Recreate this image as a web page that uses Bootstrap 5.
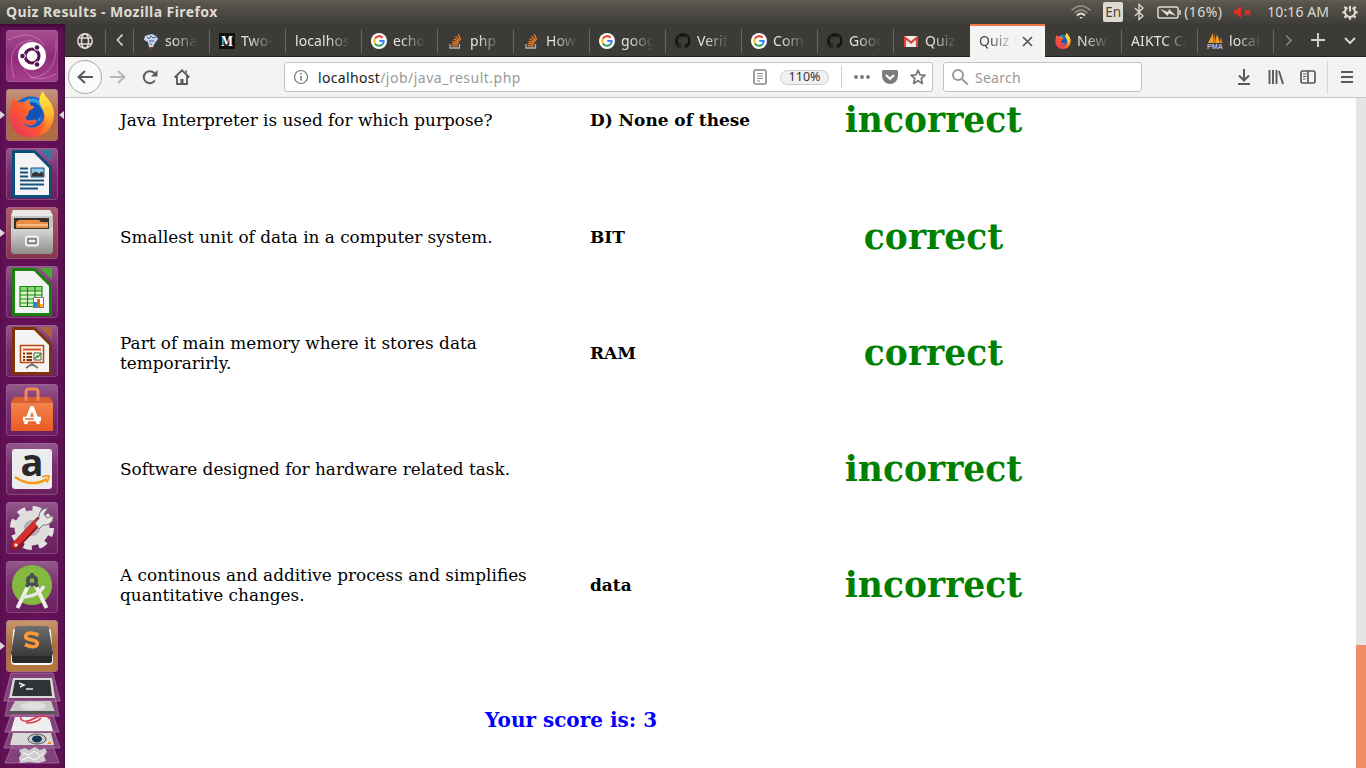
<!DOCTYPE html>
<html lang="en">
<head>
<meta charset="utf-8">
<title>Quiz Results</title>
<link href="https://cdn.jsdelivr.net/npm/bootstrap@5.3.0/dist/css/bootstrap.min.css" rel="stylesheet">
<style>
body{font-family:"Noto Sans",sans-serif;font-size:14px;line-height:1;background:#fff}
svg{display:block;flex:none;overflow:visible}
.topbar{height:24px;background:linear-gradient(#605d52,#56544b 15%,#3e3d39);color:#dfdbd2;padding:0 6px;white-space:nowrap}
.topbar .wintitle{font-weight:700;font-size:14px;letter-spacing:.42px}
.lang{width:20px;height:20px;background:#dfdbd2;color:#45433c;border-radius:2px;font-size:13.5px;padding-top:2px}
.tray svg{fill:none;stroke:#dfdbd2}
.launcher{width:65px;background:linear-gradient(90deg,#5f1053,#651059 60%,#5d1052 97%,#43103c);padding:6px 0 0 6px;box-shadow:inset 0 5px 5px -3px #35082e}
.tile{width:52px;height:52px;margin-bottom:7px;border-radius:4px;background:linear-gradient(#93598b,#792f6f 45%,#6a205f);box-shadow:inset 0 0 0 1px #a36a9c80;position:relative}
.tile.dash{background:linear-gradient(#a94f92,#8e2b79 50%,#a63f8c)}
.tile.fire{background:linear-gradient(#c6987d,#ac6a48 50%,#b46d43)}
.tile.files{background:linear-gradient(#a95c69,#88334a)}
.tile.subl{background:linear-gradient(#c89a70,#a96c38 50%,#b4773f)}
.pip{position:absolute;top:22px;width:5px;height:8px;background:#ddd4dc}
.pip-l{left:-6px;clip-path:polygon(0 0,100% 50%,0 100%)}
.pip-r{right:-6px;clip-path:polygon(100% 0,0 50%,100% 100%)}
.tabstrip{height:33px;background:#3c3b37;border-bottom:1px solid #22211f;color:#e4e1da}
.tabstrip .cell{height:32px;padding-top:2px;display:flex;align-items:center;justify-content:center;position:relative;flex:none}
.tabstrip .sep::after{content:"";position:absolute;right:0;top:5px;height:24px;width:1px;background:#67665f}
.tabstrip .btab{width:76px;padding:2px 12px 0 9px;justify-content:flex-start;gap:6px}
.btab svg{width:16px;height:16px}
.fade-text{flex:1 1 0;min-width:0;overflow:hidden;white-space:nowrap;line-height:22px;letter-spacing:.1px;-webkit-mask-image:linear-gradient(90deg,#000 25%,transparent 98%);mask-image:linear-gradient(90deg,#000 25%,transparent 98%)}
.btab .wide-text{-webkit-mask-image:linear-gradient(90deg,#000 60%,transparent 100%);mask-image:linear-gradient(90deg,#000 60%,transparent 100%)}
.tabstrip .current{height:33px;width:75px;margin-right:1px;padding-top:0;padding-bottom:1px;background:#f5f4f3;color:#474744;border-top:2px solid #f0764b;gap:5px}
.navtools{height:41px;background:#f4f3f2;border-bottom:1px solid #c6c5c3;padding:0 10px 0 3px;color:#5a5a58}
.navtools svg{fill:none;stroke:currentColor}
.backbtn{width:34px;height:34px;border:1px solid #a9a8a6;border-radius:50%;background:#fbfbfb}
.field{height:30px;background:#fff;border:1px solid #c5c3c0;border-radius:3px;color:#999}
.field>span{padding-top:1px}
.urlfield{width:649px;margin-left:94px;padding:0 6px 0 8px}
.searchfield{width:199px;margin-left:10px;padding-left:8px}
.field>.zoompill{width:49px;height:15px;margin-left:13px;padding:1px 0 0;border:1px solid #ccc;border-radius:8px;background:#f1f1f1;color:#333;font-size:12.5px}
.viewport{height:670px;overflow:hidden;font-family:"DejaVu Serif",serif;font-size:16.94px;line-height:20px;color:#000;padding-left:55px}
.results{margin-top:-36.2px}
.result{height:116px;display:grid;grid-template-columns:470px 242px 203px;align-items:center}
.result:first-child{height:117px}
.result .ask{padding-right:40px;font-size:16.88px}
.verdict{font-size:34.5px;line-height:42px;font-weight:700;color:green;text-align:center}
.score{color:#00f;font-size:20px;font-weight:700;line-height:24px;margin:64.7px 0 0 365px}
.track{width:10px;height:670px;background:#e5e5e5;padding-top:547px}
.thumb{height:123px;background:#f08d67}
</style>
</head>
<body class="overflow-hidden">
<svg width="0" height="0" class="position-absolute">
<defs>
<linearGradient id="gOr" x2="0" y2="1"><stop stop-color="#f58b57"/><stop offset="1" stop-color="#e85a22"/></linearGradient>
<linearGradient id="gGray" x2="0" y2="1"><stop stop-color="#dcdcda"/><stop offset="1" stop-color="#8e8e8c"/></linearGradient>
<linearGradient id="gKey" x2="0" y2="1"><stop stop-color="#6e6e6e"/><stop offset="1" stop-color="#3a3a3a"/></linearGradient>
<linearGradient id="gFox" x1="0" x2="1" y1="1" y2="0"><stop stop-color="#e9296b"/><stop offset=".45" stop-color="#fd5b2d"/><stop offset="1" stop-color="#ffd23c"/></linearGradient>
<linearGradient id="gTail" x2="0" y2="1"><stop stop-color="#fff04d"/><stop offset=".5" stop-color="#ffb92b"/><stop offset="1" stop-color="#fb5a2b"/></linearGradient>
<symbol id="google" viewBox="0 0 16 16"><circle cx="8" cy="8" r="8" fill="#fff"/><g fill="none" stroke-width="2.1"><path d="M11.6 4.7A4.7 4.7 0 0 0 4 5.6" stroke="#ea4335"/><path d="M4 5.6a4.7 4.7 0 0 0 0 4.9" stroke="#fbbc05"/><path d="M4 10.5a4.7 4.7 0 0 0 7.3 1" stroke="#34a853"/><path d="M11.3 11.5A4.7 4.7 0 0 0 12.7 8H8.2" stroke="#4285f4"/></g></symbol>
<symbol id="stack" viewBox="0 0 16 16"><path d="M1 11v4h9.500v-4" fill="none" stroke="#aab4bd" stroke-width="1.300"/><g stroke="#f48024" stroke-width="1.300"><path d="M2.800 12.800h6M2.900 10.600l6 .6M3.500 8.300l5.900 1.600M4.700 5.800l5.400 3M6.500 3.400l4.300 4.400M9.200 1.400l2.500 5.300"/></g></symbol>
<symbol id="hub" viewBox="0 0 16 16"><path fill="#171615" d="M8 0a8 8 0 0 0-2.5 15.6c.4.1.5-.2.5-.4v-1.5c-2 .4-2.6-.5-2.8-1-.1-.2-.5-1-.8-1.2-.3-.1-.7-.5 0-.5s1.100.6 1.200.8c.700 1.200 1.900.9 2.400.7.100-.5.300-.9.500-1.100-1.800-.2-3.600-.9-3.600-4 0-.8.300-1.600.8-2.100-.1-.2-.4-1 .1-2.100 0 0 .7-.2 2.200.8a7.600 7.600 0 0 1 4 0c1.500-1 2.200-.8 2.200-.8.400 1.100.2 1.900.1 2.100.5.600.8 1.300.8 2.100 0 3.100-1.900 3.700-3.600 3.900.3.300.5.700.5 1.500v2.300c0 .2.100.5.500.4A8 8 0 0 0 8 0z"/></symbol>
<symbol id="fox" viewBox="0 0 44 46"><circle cx="21" cy="24" r="19" fill="#1c5fc8"/><path d="M11 13c7-7 14-8 21-2l-2 18-15 4z" fill="#27a2e8"/><path d="M15 13c7-6 17-1 17 9l-5 8-13-2z" fill="#1552b5"/><path fill="url(#gFox)" d="M3 6c2 1 4 3 5 5 2-1 5-1 7 0 1-2 3-3 5-4-1 3-1 5 1 7l3 1c1 2-4 3-5 5-1 2 0 4-3 5-1 4 4 5 9 3 2 0 2 2 0 4-4 4-9 1-12-1 3 5 11 8 18 1 5-5 4-15-1-20 0-4-1-7 2-12l2 3c5 5 9 12 9 20 0 13-9 23-22 23C8 46 0 36 0 25 0 17 2 12 3 6z"/><path fill="url(#gTail)" d="M30 12c-2-4 1-9 3-12 2 6 11 11 11 23 0 12-8 21-18 22 8-5 12-14 8-23-1-4-3-6-4-10z"/></symbol>
</defs></svg>

<header class="topbar d-flex align-items-center justify-content-between">
  <span class="wintitle">Quiz Results - Mozilla Firefox</span>
  <div class="tray d-flex align-items-center">
    <svg width="20" height="16" viewBox="0 0 20 16" stroke-width="1.6"><g opacity=".5"><path d="M.5 6.500Q10-2.500 19.500 6.500M3.500 9q6.500-6 13 0"/></g><path d="M6 11.500q4-4 8 0" stroke-width="2"/><path d="M8.300 13h3.400L10 15z" fill="#dfdbd2" stroke="none"/></svg>
    <span class="lang d-flex align-items-center justify-content-center" style="margin-left:12px">En</span>
    <svg width="10" height="16" viewBox="0 0 10 16" stroke-width="1.3" style="margin-left:11px"><path d="M1 4l8 8-4 3.500V.5L9 4l-8 8"/></svg>
    <svg width="25" height="13" viewBox="0 0 25 13" stroke-width="1.500" style="margin-left:13px"><rect x="1" y="1" width="20" height="11" rx="1.500"/><path d="M23 4v5"/><path d="M3 3l8 3 1-3 7 7-7-2.500-1.500 2.500z" fill="#dfdbd2" stroke="none"/></svg>
    <span style="margin-left:2px;letter-spacing:.4px">(16%)</span>
    <svg width="18" height="12" viewBox="0 0 18 12" style="margin-left:12px"><path d="M0 4h2.500L7 0v12L2.500 8H0z" fill="#e03020" stroke="none"/><path d="M11 4l5 5m0-5l-5 5" stroke="#e03020" stroke-width="1.900"/></svg>
    <span style="margin-left:15px;letter-spacing:.08px">10:16 AM</span>
    <svg width="16" height="16" viewBox="0 0 16 16" stroke-width="2" style="margin:0 2px 0 13px"><path d="M5.500 3.700a5 5 0 1 0 5 0"/><path d="M8 2v5.500"/><path stroke-width="2.200" d="M.3 8.300h2.500M13.200 8.300h2.500M2.300 2.700l2 2M13.700 2.700l-2 2M2.500 13.700l1.800-1.800M13.500 13.700l-1.800-1.800M8 13v2.800"/></svg>
  </div>
</header>

<div class="d-flex">
<aside class="launcher" style="height:744px">
  <div class="tile dash"><svg width="52" height="52" viewBox="0 0 52 52"><g fill="none" stroke="#e6a8d7" stroke-opacity=".45" stroke-width="1"><path d="M2 10q24-12 36 5M8 48Q-2 12 27 10M50 12q2 34-26 36M18 38q8 18 32 6"/></g><circle cx="26" cy="26" r="14" fill="#fff"/><circle cx="26" cy="26" r="7" fill="none" stroke="#5b1450" stroke-width="3.200"/><g fill="#5b1450" stroke="#fff"><circle cx="16.500" cy="26" r="2.800"/><circle cx="31" cy="17.500" r="2.800"/><circle cx="31" cy="34.500" r="2.800"/></g></svg></div>
  <div class="tile fire"><i class="pip pip-l"></i><i class="pip pip-r"></i><svg width="52" height="52" viewBox="0 0 52 52"><use href="#fox" x="4" y="2.500" width="44" height="46"/></svg></div>
  <div class="tile"><svg width="52" height="52" viewBox="0 0 52 52"><path d="M6 3q0-1 1-1h22l17 17v30q0 1-1 1H7q-1 0-1-1z" fill="#0d4f7c"/><path d="M9 5h19l15 15v27H9z" fill="#f4f4f4"/><path d="M34 2h12v12z" fill="#3379a3"/><path d="M14 20.500h8M14 24.500h8M14 28.500h8M14 32.500h24M14 36.500h24M14 40.500h18" stroke="#15527c" stroke-width="2"/><path d="M25 20h13v9H25z" fill="#8dcbea" stroke="#15527c"/><path d="M26 28.500v-3l4-2 3 2 3-2 1.500 2v3z" fill="#333"/></svg></div>
  <div class="tile files"><i class="pip pip-l"></i><svg width="52" height="52" viewBox="0 0 52 52"><path d="M7 3h37l3 6v34H5V9z" fill="#c4c4c1"/><path d="M7 3h37l3 6H5z" fill="#e8e8e6"/><path d="M8 11h35v12H8z" fill="#38322f"/><path d="M10 21v-6l3-2h20l2 2h7v6z" fill="#eb8c43"/><path d="M11 18h31" stroke="#fff0d8"/><path d="M7 22h37l3-2v25l-2 2H7l-2-2V20z" fill="url(#gGray)"/><rect x="20" y="29.500" width="12" height="9" rx="2" fill="none" stroke="#f0f0ee" stroke-width="2"/><rect x="22" y="32" width="8" height="4" fill="#eee" stroke="#555"/></svg></div>
  <div class="tile"><svg width="52" height="52" viewBox="0 0 52 52"><path d="M6 3q0-1 1-1h22l17 17v30q0 1-1 1H7q-1 0-1-1z" fill="#18820c"/><path d="M9 5h19l15 15v27H9z" fill="#f4f4f4"/><path d="M34 2h12v12z" fill="#44ae2e"/><path d="M14 20h22v21H14z" fill="#d9f4c9"/><path d="M14 20h22v5H14z" fill="#8fd67c"/><path d="M14 20.500h22v20H14zM14 25h22M14 29h22M14 33h22M14 37h22M21.500 20v21M29 20v21" fill="none" stroke="#1c8812" stroke-width="1.200"/><path d="M27.500 31.500h10v10h-10z" fill="#fff" stroke="#777"/><path d="M28 36h3v5h-3z" fill="#2486cb"/><path d="M31 33h3v8h-3z" fill="#e85b21"/><path d="M34 38h3v3h-3z" fill="#f5bd1c"/></svg></div>
  <div class="tile"><svg width="52" height="52" viewBox="0 0 52 52"><path d="M6 3q0-1 1-1h22l17 17v30q0 1-1 1H7q-1 0-1-1z" fill="#803306"/><path d="M9 5h19l15 15v27H9z" fill="#f4f4f4"/><path d="M34 2h12v12z" fill="#b0623a"/><path d="M14.500 20.500h23v17h-23z" fill="#fff3e7" stroke="#b44a16" stroke-width="1.500"/><path d="M17 24.500h18" stroke="#d45b20" stroke-width="2"/><path d="M17 28.500h9M17 32h9M17 35h9" stroke="#803306" stroke-width="1.800" stroke-dasharray="2 1.500 6"/><path d="M28 28h7v7h-7z" fill="#fff" stroke="#555"/><path d="M29 34l2-3 1 1 3-4" fill="none" stroke="#39a21f" stroke-width="1.500"/><path d="M26 38v3m0-2l-6 4m6-4l6 4" stroke="#777" stroke-width="2"/></svg></div>
  <div class="tile"><svg width="52" height="52" viewBox="0 0 52 52"><path d="M8 13h36l3 6v28H5V19z" fill="url(#gOr)"/><path d="M5 19h42l-3-6H8z" fill="#d6612f"/><path d="M20 17V8q0-3 3-3h6q3 0 3 3v9" fill="none" stroke="#ef8a5b" stroke-width="3"/><path d="M19.500 40l6-16h1l6 16" stroke="#fff" stroke-width="3.500" fill="none"/><path d="M17 35h18" stroke="#fff" stroke-width="4.500"/><path d="M19 35h9" stroke="#ec6a31" stroke-width="1.500"/></svg></div>
  <div class="tile"><svg width="52" height="52" viewBox="0 0 52 52"><rect x="6" y="6" width="40" height="40" rx="3" fill="#ececec"/><text x="26" y="33" text-anchor="middle" font-family="Open Sans" font-weight="700" font-size="38" fill="#282828">a</text><path d="M9 34q16 11 32 2" fill="none" stroke="#f79a1a" stroke-width="2.600"/><path d="M36 34q4-1.500 7-1-.2 4-2.500 6.500" fill="none" stroke="#f79a1a" stroke-width="1.800"/></svg></div>
  <div class="tile"><svg width="52" height="52" viewBox="0 0 52 52"><circle cx="26" cy="26" r="19" fill="none" stroke="#e3e3e1" stroke-width="6" stroke-dasharray="8 6.920"/><circle cx="26" cy="26" r="12.500" fill="none" stroke="#dededc" stroke-width="10"/><circle cx="26" cy="26" r="8" fill="#b9aeb8"/><path d="M33 19L9 44" stroke="#8c1515" stroke-width="8" stroke-linecap="round"/><path d="M31 20L9 43" stroke="#d92e2e" stroke-width="5.500" stroke-linecap="round"/><path d="M29 21l4-4c-1-6 3-11 9-11l-4 6 3 4 6-2c1 6-5 10-10 9l-4 4z" fill="#e5e5e3" stroke="#777"/><circle cx="10" cy="43" r="1.500" fill="#fff"/></svg></div>
  <div class="tile"><svg width="52" height="52" viewBox="0 0 52 52"><circle cx="26" cy="24" r="20" fill="#84b940"/><path d="M24 21L11.500 47M28 21l12.500 26" stroke="#eee" stroke-width="4"/><path d="M15 36q17 0 23-11" fill="none" stroke="#e8e8e8" stroke-width="3.500"/><circle cx="26" cy="19.500" r="4.200" fill="none" stroke="#4a5052" stroke-width="3.800"/><path d="M26 12v4M22.500 22l-2 4M29.500 22l2 4" stroke="#4a5052" stroke-width="3.500"/></svg></div>
  <div class="tile subl"><i class="pip pip-l"></i><svg width="52" height="52" viewBox="0 0 52 52"><path d="M7 11q1-3 4-3h30q3 0 4 3l2 30q0 4-4 4H9q-4 0-4-4z" fill="#fafafa"/><path d="M6 35h40v6q0 2-2 2H8q-2 0-2-2z" fill="#292929"/><path d="M9 9q0-3 3-3h28q3 0 3 3l4 24q0 3-3 3H8q-3 0-3-3z" fill="url(#gKey)"/><path d="M32.500 15q-8-3.500-11.500-1c-3.500 4 0 5 5 6s7 3 4 6q-3.500 2-11-1.500" fill="none" stroke="#ff9838" stroke-width="3.600"/></svg></div>
  <svg width="58" height="92" viewBox="0 0 58 92" style="margin-top:-6px"><g fill="#a472a0" fill-opacity=".5" stroke="#b48ab0" stroke-opacity=".6"><path d="M5 0h42l7 28H-2zM3 24h46l4 19H-1zM5 42h42l6 17H-1zM4 58h44l6 17H-2zM6 73h41l6 17H-1z"/></g>
  <path d="M7 5h39l3 20H3z" fill="#d9d9d7"/><path d="M9 7h35l2 16H6z" fill="#303336"/><path d="M13 10l5 2-4 2M20 16h7" fill="none" stroke="#eee" stroke-width="1.500"/><path d="M9 28h36l4 11H3z" fill="#c9c9c7"/><ellipse cx="27" cy="33" rx="13" ry="4" fill="#dfdfdd"/><path d="M3 38h46v3H3z" fill="#555"/><path d="M9 44h34l4 14H5z" fill="#eee"/><path d="M15 43c-2 5 5 7 12 3s15-4 16 0M20 50q11 0 15-5" fill="none" stroke="#d73a50" stroke-width="1.500"/><path d="M7 60h38l3 12H4z" fill="#d8d8d6"/><ellipse cx="31" cy="66" rx="9" ry="5" fill="#c8c8c8" stroke="#555"/><ellipse cx="31" cy="66" rx="5" ry="3.500" fill="#173654"/><path d="M42 69h3v2h-3z" fill="#f28c24"/><path d="M13 77l6-2 4 2 6-3 5 3 5-2 2 4-3 4 2 5-8 2-9-1-9 1-1-5 2-4z" fill="#cfcbce"/><path d="M17 80l6 2 5-4 6 5 4-3M16 87l7-3 5 3 6-3" fill="none" stroke="#fff"/></svg>
</aside>

<main class="flex-grow-1" style="min-width:0">
  <div class="tabstrip d-flex">
    <div class="cell sep" style="width:41px;padding-right:2px"><svg width="16" height="16" viewBox="0 0 16 16" fill="none" stroke="#dedbd4" stroke-width="1.500"><circle cx="8" cy="8" r="7.200"/><ellipse cx="8" cy="8" rx="3.500" ry="7.200"/><path d="M1.500 5h13M1.500 11h13"/></svg></div>
    <div class="cell sep" style="width:28px;padding-top:0"><svg width="8" height="12" viewBox="0 0 8 12" fill="none" stroke="#cfcdc7" stroke-width="1.800"><path d="M6.500.5L1.500 6l5 5.500"/></svg></div>
    <div class="cell sep btab"><svg viewBox="0 0 16 16"><path d="M5 2l4-1 4 2 2 3-3 4-2 4H6L5 9 1 7l1-4z" fill="#c6d3ef"/><path d="M4 4l2 2 2-3 2 2 3-1M6 8h5M7 10l2 2" fill="none" stroke="#4c5a86" stroke-width="1"/><path d="M6 14h4v1.500H6z" fill="#a34a22"/></svg><span class="fade-text">sona</span></div>
    <div class="cell sep btab"><svg viewBox="0 0 16 16"><path d="M0 0h16v16H0z" fill="#10100f"/><text x="8" y="12.500" text-anchor="middle" font-family="DejaVu Serif" font-weight="700" font-size="12" textLength="12" lengthAdjust="spacingAndGlyphs" fill="#fff">M</text></svg><span class="fade-text">Two-F</span></div>
    <div class="cell sep btab"><span class="fade-text wide-text">localhost</span></div>
    <div class="cell sep btab"><svg><use href="#google"/></svg><span class="fade-text">echo</span></div>
    <div class="cell sep btab" style="padding-left:11px;gap:5px"><svg><use href="#stack"/></svg><span class="fade-text">php -</span></div>
    <div class="cell sep btab" style="padding-left:11px;gap:5px"><svg><use href="#stack"/></svg><span class="fade-text">How</span></div>
    <div class="cell sep btab"><svg><use href="#google"/></svg><span class="fade-text">goog</span></div>
    <div class="cell sep btab"><svg><use href="#hub"/></svg><span class="fade-text">Verif</span></div>
    <div class="cell sep btab"><svg><use href="#google"/></svg><span class="fade-text">Com</span></div>
    <div class="cell sep btab"><svg><use href="#hub"/></svg><span class="fade-text">Goog</span></div>
    <div class="cell btab"><svg viewBox="0 0 16 16"><path d="M1 3h14v11H1z" fill="#eee"/><path d="M2 14V4.500L8 9.500l6-5V14" fill="none" stroke="#d8443a" stroke-width="2.200"/></svg><span class="fade-text">Quiz</span></div>
    <div class="cell btab current"><span class="fade-text">Quiz R</span><svg style="width:11px;height:11px" viewBox="0 0 11 11" stroke="#555" stroke-width="1.700"><path d="M1 1l9 9m0-9l-9 9"/></svg></div>
    <div class="cell sep btab"><svg><use href="#fox"/></svg><span class="fade-text">New</span></div>
    <div class="cell sep btab"><span class="fade-text wide-text">AIKTC CA</span></div>
    <div class="cell sep btab"><svg viewBox="0 0 16 16"><path d="M6 0v10H1zM10 1l3 9H8z" fill="#f59b28"/><path d="M7 0l2 10H6zM14 4l1.500 6h-3z" fill="#d8801c"/><text x="0" y="15.500" font-family="Liberation Sans" font-weight="700" font-size="7" textLength="16" lengthAdjust="spacingAndGlyphs" fill="#b4b8e0">PMA</text></svg><span class="fade-text">local</span></div>
    <div class="cell" style="width:28px;padding-top:0"><svg width="7" height="11" viewBox="0 0 7 11" fill="none" stroke="#85837e" stroke-width="1.700"><path d="M1 .5l5 5-5 5"/></svg></div>
    <div class="cell" style="width:32px;padding-top:0"><svg width="14" height="14" viewBox="0 0 14 14" stroke="#d6d3cc" stroke-width="1.900"><path d="M7 0v14M0 7h14"/></svg></div>
    <div class="cell" style="width:32px;padding-top:0"><svg width="12" height="7" viewBox="0 0 12 7" fill="none" stroke="#d6d3cc" stroke-width="2"><path d="M1 1l5 5 5-5"/></svg></div>
  </div>

  <nav class="navtools d-flex align-items-center">
    <div class="backbtn d-flex align-items-center justify-content-center"><svg width="16" height="14" viewBox="0 0 16 14" stroke-width="2"><path d="M16 7H1.500M8 1L1.500 7 8 13"/></svg></div>
    <svg width="16" height="14" viewBox="0 0 16 14" stroke-width="2" style="margin-left:8px;color:#b9b8b6"><path d="M0 7h14.500M8 1l6.500 6L8 13"/></svg>
    <svg width="16" height="16" viewBox="0 0 16 16" stroke-width="2" style="margin-left:16px"><path d="M12.800 11.500A6 6 0 1 1 12.500 4.500"/><path d="M15.500 1v6.500H9z" fill="currentColor" stroke="none"/></svg>
    <svg width="16" height="16" viewBox="0 0 16 16" stroke-width="1.800" style="margin-left:16px"><path d="M.7 8.500L8 1.300l7.300 7.200M3 7v8h10V7"/><path d="M6.500 15v-5h3v5zM11 1.500h2V5" fill="currentColor" stroke="none"/></svg>
    <div class="field urlfield d-flex align-items-center">
      <svg width="16" height="16" viewBox="0 0 16 16" stroke-width="1.200" style="color:#777"><circle cx="8" cy="8" r="6.500"/><path d="M8 7v4.500M8 4v1.600" stroke-width="1.600"/></svg>
      <span class="me-auto" style="margin-left:9px;letter-spacing:.5px"><span style="color:#222;letter-spacing:.33px">localhost</span>/job/java_result.php</span>
      <svg width="14" height="16" viewBox="0 0 14 16" stroke-width="1.600" style="color:#888"><rect x="1" y="1" width="12" height="14" rx="1.500"/><path d="M4 4.500h6M4 7h6M4 9.500h6M4 12h3" stroke-width="1"/></svg>
      <span class="zoompill d-flex align-items-center justify-content-center">110%</span>
      <span style="width:1px;height:22px;background:#ccc;margin-left:12px"></span>
      <svg width="16" height="4" viewBox="0 0 16 4" style="margin-left:12px"><g fill="#777" stroke="none"><circle cx="2" cy="2" r="1.900"/><circle cx="8" cy="2" r="1.900"/><circle cx="14" cy="2" r="1.900"/></g></svg>
      <svg width="16" height="14" viewBox="0 0 16 14" style="margin-left:12px"><path d="M1.500 0h13Q16 0 16 1.500V6a8 8 0 0 1-16 0V1.500Q0 0 1.500 0z" fill="#7c7c7c" stroke="none"/><path d="M4 5l4 3.800L12 5" stroke="#fff" stroke-width="2"/></svg>
      <svg width="16" height="16" viewBox="0 0 16 16" stroke-width="1.700" stroke-linejoin="round" style="margin-left:12px;color:#777"><path d="M8 1.200l2 4.600 5 .4-3.800 3.300 1.200 4.900L8 11.800l-4.400 2.600 1.200-4.900L1 6.200l5-.4z"/></svg>
    </div>
    <div class="field searchfield d-flex align-items-center"><svg width="16" height="16" viewBox="0 0 16 16" stroke-width="2"><circle cx="6" cy="6" r="5"/><path d="M9.700 9.700l6 5.800"/></svg><span style="margin-left:7px;letter-spacing:.25px">Search</span></div>
    <div class="d-flex align-items-center ms-auto">
      <svg width="14" height="16" viewBox="0 0 14 16" stroke-width="2"><path d="M7 0v11M2 6.500L7 11.500l5-5M1 15h12"/></svg>
      <svg width="16" height="14" viewBox="0 0 16 14" stroke-width="1.900" style="margin-left:17px"><path d="M1.500 0v14M5 0v14M8.500 0v14M11 1l4 13"/></svg>
      <svg width="16" height="14" viewBox="0 0 16 14" stroke-width="1.700" style="margin-left:16px"><rect x="1" y="1" width="14" height="12" rx="1.500"/><path d="M8 1v12"/><path d="M3 4h3.500M3 6.500h3.500M3 9h2.500" stroke-width="1"/></svg>
      <span style="width:1px;height:33px;background:#d5d4d2;margin-left:11px"></span>
      <svg width="12" height="12" viewBox="0 0 12 12" stroke-width="2" style="margin:0 3px 0 13px"><path d="M0 1h12M0 6h12M0 11h12"/></svg>
    </div>
  </nav>

  <div class="d-flex">
    <section class="viewport flex-grow-1">
      <div class="results">
        <div class="result"><div class="ask">Java Interpreter is used for which purpose?</div><b>D) None of these</b><div class="verdict">incorrect</div></div>
        <div class="result"><div class="ask">Smallest unit of data in a computer system.</div><b>BIT</b><div class="verdict">correct</div></div>
        <div class="result"><div class="ask">Part of main memory where it stores data temporarirly.</div><b>RAM</b><div class="verdict">correct</div></div>
        <div class="result"><div class="ask">Software designed for hardware related task.</div><b></b><div class="verdict">incorrect</div></div>
        <div class="result"><div class="ask">A continous and additive process and simplifies quantitative changes.</div><b>data</b><div class="verdict">incorrect</div></div>
      </div>
      <div class="score">Your score is: 3</div>
    </section>
    <div class="track"><div class="thumb"></div></div>
  </div>
</main>
</div>
<script src="https://cdn.jsdelivr.net/npm/bootstrap@5.3.0/dist/js/bootstrap.bundle.min.js"></script>
</body>
</html>
